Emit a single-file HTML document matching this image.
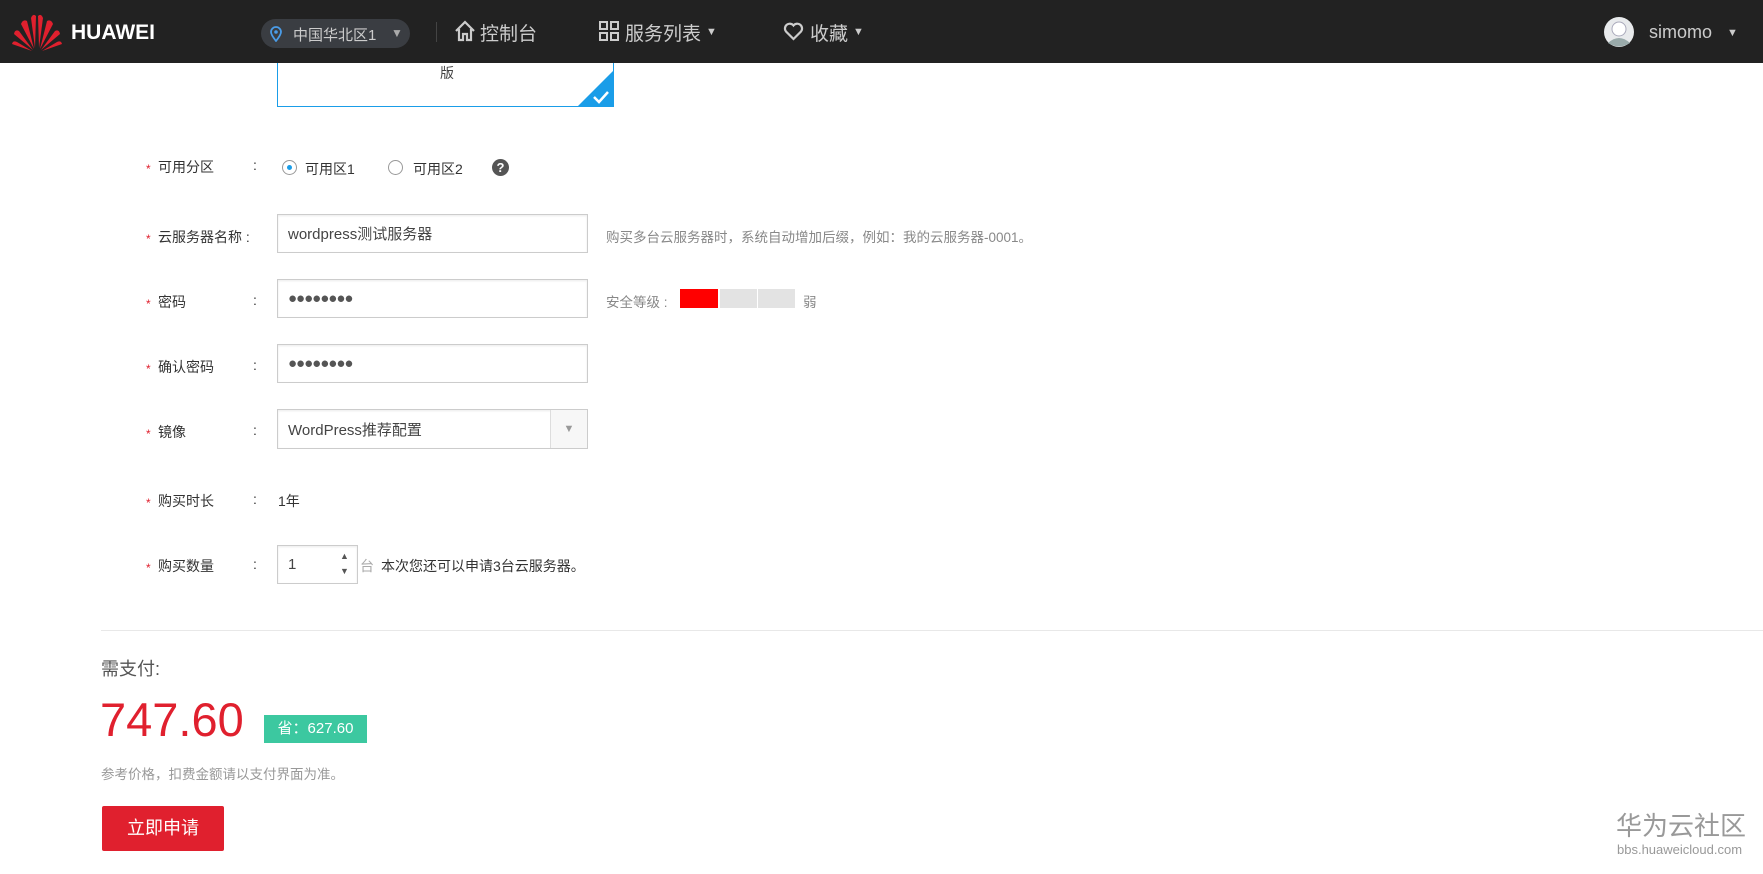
<!DOCTYPE html>
<html><head><meta charset="utf-8"><style>
*{margin:0;padding:0;box-sizing:border-box}
body{width:1763px;height:874px;position:relative;background:#fff;font-family:"Liberation Sans","Noto Sans CJK SC",sans-serif;color:#333;overflow:hidden}
.a{position:absolute;white-space:nowrap}
.hd{position:absolute;left:0;top:0;width:1763px;height:63px;background:#222}
.nav{color:#ccc;font-size:19px}
.lab{font-size:14px;color:#333}
.star{color:#e0202e;font-size:12px}
.inp{position:absolute;background:#fff;border:1px solid #ccc;box-shadow:inset 0 1px 2px rgba(0,0,0,.08);font-size:15px;color:#444;padding-left:10px;display:flex;align-items:center}
.hint{font-size:13.5px;color:#888}
</style></head><body>
<div class="hd"></div>
<svg class="a" style="left:11px;top:12px" width="52" height="40" viewBox="0 0 52 40">
<g fill="#e0202e">
<path d="M24 36 L20 6 Q22 1 25 4 Z"/><path d="M28 36 L32 6 Q30 1 27 4 Z"/>
<path d="M23 37 L10 12 Q12 7 16 9 Z"/><path d="M29 37 L42 12 Q40 7 36 9 Z"/>
<path d="M22 38 L3 22 Q4 17 8 19 Z"/><path d="M30 38 L49 22 Q48 17 44 19 Z"/>
<path d="M21 39 L1 32 Q2 28 6 30 Z"/><path d="M31 39 L51 32 Q50 28 46 30 Z"/>
</g></svg>
<div class="a" style="left:71px;top:21px;color:#fff;font-weight:bold;font-size:21px">HUAWEI</div>
<div class="a" style="left:261px;top:19px;width:149px;height:29px;border-radius:15px;background:#3a3d42"></div>
<svg class="a" style="left:270px;top:26px" width="12" height="16" viewBox="0 0 12 16"><path d="M6 15 C2 10 1 8 1 6 A5 5 0 0 1 11 6 C11 8 10 10 6 15Z" fill="none" stroke="#4a9ce8" stroke-width="1.8"/><circle cx="6" cy="6" r="1.8" fill="#4a9ce8"/></svg>
<div class="a" style="left:293px;top:24px;color:#ccc;font-size:15px">中国华北区1</div>
<div class="a" style="left:391px;top:26px;color:#aaa;font-size:12px">▼</div>
<div class="a" style="left:436px;top:22px;width:1px;height:20px;background:#444"></div>
<svg class="a" style="left:454px;top:20px" width="22" height="22" viewBox="0 0 22 22"><path d="M2 11 L11 2 L20 11 M5 9 V20 H9 V14 H13 V20 H17 V9" fill="none" stroke="#ccc" stroke-width="2.2"/></svg>
<div class="a nav" style="left:480px;top:19px">控制台</div>
<svg class="a" style="left:599px;top:21px" width="20" height="20" viewBox="0 0 20 20" fill="none" stroke="#ccc" stroke-width="2"><rect x="1" y="1" width="7" height="7"/><rect x="12" y="1" width="7" height="7"/><rect x="1" y="12" width="7" height="7"/><rect x="12" y="12" width="7" height="7"/></svg>
<div class="a nav" style="left:625px;top:19px">服务列表</div>
<div class="a" style="left:706px;top:26px;color:#ccc;font-size:11px">▼</div>
<svg class="a" style="left:783px;top:22px" width="21" height="19" viewBox="0 0 21 19"><path d="M10.5 17 L3 9.5 A4.3 4.3 0 0 1 10.5 3.5 A4.3 4.3 0 0 1 18 9.5 Z" fill="none" stroke="#ccc" stroke-width="2.2"/></svg>
<div class="a nav" style="left:810px;top:19px">收藏</div>
<div class="a" style="left:853px;top:26px;color:#ccc;font-size:11px">▼</div>
<svg class="a" style="left:1604px;top:17px" width="30" height="30" viewBox="0 0 30 30"><circle cx="15" cy="15" r="15" fill="#e8eaec"/><circle cx="15" cy="12" r="7" fill="#fff" stroke="#aab" stroke-width="1"/><path d="M4 26 Q15 16 26 26 Q15 33 4 26Z" fill="#9aa"/></svg>
<div class="a" style="left:1649px;top:22px;color:#ccc;font-size:18px">simomo</div>
<div class="a" style="left:1727px;top:27px;color:#ccc;font-size:11px">▼</div>

<div class="a" style="left:277px;top:63px;width:337px;height:44px;border:1px solid #1a9de8;border-top:none"></div>
<div class="a" style="left:440px;top:63px;font-size:14px;color:#444">版</div>
<svg class="a" style="left:577px;top:70px" width="37" height="37" viewBox="0 0 37 37"><path d="M37 0 V37 H0Z" fill="#1a9de8"/><path d="M17 27 L22 32 L31 22" fill="none" stroke="#fff" stroke-width="2.5"/></svg>

<div class="a star" style="left:146px;top:162px">*</div><div class="a lab" style="left:158px;top:157px">可用分区</div><div class="a lab" style="left:253px;top:157px">:</div>
<div class="a" style="left:282px;top:160px;width:15px;height:15px;border:1px solid #999;border-radius:50%"></div><div class="a" style="left:287px;top:165px;width:5px;height:5px;background:#1a9de8;border-radius:50%"></div>
<div class="a lab" style="left:305px;top:159px">可用区1</div>
<div class="a" style="left:388px;top:160px;width:15px;height:15px;border:1px solid #999;border-radius:50%"></div>
<div class="a lab" style="left:413px;top:159px">可用区2</div>
<div class="a" style="left:492px;top:159px;width:17px;height:17px;background:#555;border-radius:50%;color:#fff;font-size:13px;font-weight:bold;text-align:center;line-height:17px">?</div>

<div class="a star" style="left:146px;top:232px">*</div><div class="a lab" style="left:158px;top:227px">云服务器名称 :</div>
<div class="inp" style="left:277px;top:214px;width:311px;height:39px">wordpress测试服务器</div>
<div class="a hint" style="left:606px;top:226px">购买多台云服务器时，系统自动增加后缀，例如：我的云服务器-0001。</div>

<div class="a star" style="left:146px;top:297px">*</div><div class="a lab" style="left:158px;top:292px">密码</div><div class="a lab" style="left:253px;top:292px">:</div>
<div class="inp" style="left:277px;top:279px;width:311px;height:39px;letter-spacing:-1px;color:#555">●●●●●●●●</div>
<div class="a hint" style="left:606px;top:291px">安全等级 :</div>
<div class="a" style="left:680px;top:289px;width:38px;height:19px;background:#f00"></div>
<div class="a" style="left:720px;top:289px;width:37px;height:19px;background:#e3e3e3"></div>
<div class="a" style="left:758px;top:289px;width:37px;height:19px;background:#e3e3e3"></div>
<div class="a hint" style="left:803px;top:291px">弱</div>

<div class="a star" style="left:146px;top:362px">*</div><div class="a lab" style="left:158px;top:357px">确认密码</div><div class="a lab" style="left:253px;top:357px">:</div>
<div class="inp" style="left:277px;top:344px;width:311px;height:39px;letter-spacing:-1px;color:#555">●●●●●●●●</div>

<div class="a star" style="left:146px;top:427px">*</div><div class="a lab" style="left:158px;top:422px">镜像</div><div class="a lab" style="left:253px;top:422px">:</div>
<div class="inp" style="left:277px;top:409px;width:311px;height:40px">WordPress推荐配置</div>
<div class="a" style="left:550px;top:410px;width:37px;height:38px;border-left:1px solid #ddd;background:#f7f7f7;color:#999;font-size:11px;text-align:center;line-height:38px">▼</div>

<div class="a star" style="left:146px;top:496px">*</div><div class="a lab" style="left:158px;top:491px">购买时长</div><div class="a lab" style="left:253px;top:491px">:</div>
<div class="a lab" style="left:278px;top:491px">1年</div>

<div class="a star" style="left:146px;top:561px">*</div><div class="a lab" style="left:158px;top:556px">购买数量</div><div class="a lab" style="left:253px;top:556px">:</div>
<div class="inp" style="left:277px;top:545px;width:81px;height:39px">1</div>
<div class="a" style="left:340px;top:551px;font-size:9px;color:#555">▲</div><div class="a" style="left:340px;top:566px;font-size:9px;color:#555">▼</div>
<div class="a" style="left:360px;top:556px;font-size:14px;color:#aaa">台</div>
<div class="a lab" style="left:381px;top:556px">本次您还可以申请3台云服务器。</div>

<div class="a" style="left:101px;top:630px;width:1662px;height:1px;background:#e8e8e8"></div>
<div class="a" style="left:101px;top:655px;font-size:18px;color:#555">需支付:</div>
<div class="a" style="left:100px;top:692px;font-size:47px;color:#e0202e">747.60</div>
<div class="a" style="left:264px;top:715px;width:103px;height:28px;background:#3cc8a0;color:#fff;font-size:15px;text-align:center;line-height:28px">省：627.60</div>
<div class="a" style="left:101px;top:763px;font-size:13.5px;color:#999">参考价格，扣费金额请以支付界面为准。</div>
<div class="a" style="left:102px;top:806px;width:122px;height:45px;background:#e0202e;border-radius:2px;color:#fff;font-size:18px;text-align:center;line-height:45px">立即申请</div>

<div class="a" style="left:1616px;top:806px;font-size:26px;color:#999">华为云社区</div>
<div class="a" style="left:1617px;top:842px;font-size:13px;color:#999">bbs.huaweicloud.com</div>
</body></html>
